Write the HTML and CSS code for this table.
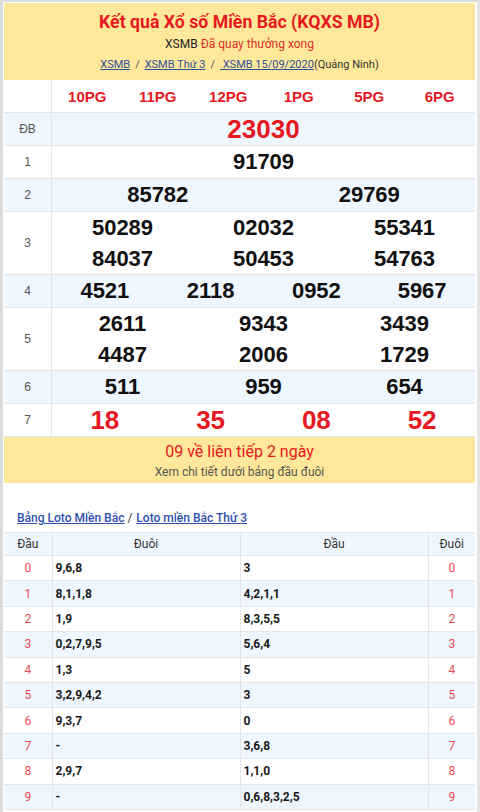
FILE: index.html
```html
<!DOCTYPE html>
<html lang="vi">
<head>
<meta charset="utf-8">
<title>KQXS MB</title>
<link rel="stylesheet" href="styles.css">
</head>
<body>
<div class="page">
  <div class="head">
    <h1 class="title">Kết quả Xổ số Miền Bắc (KQXS MB)</h1>
    <div class="sub">XSMB <span class="sub-red">Đã quay thưởng xong</span></div>
    <div class="crumbs"><a href="#">XSMB</a><span class="sep">/</span><a href="#">XSMB Thứ 3</a><span class="sep">/</span><a href="#">&nbsp;XSMB 15/09/2020</a>(Quảng Ninh)</div>
  </div>

  <div class="results">
    <div class="row">
      <div class="lab"></div>
      <div class="vals c6 codes"><span>10PG</span><span>11PG</span><span>12PG</span><span>1PG</span><span>5PG</span><span>6PG</span></div>
    </div>
    <div class="row alt">
      <div class="lab">ĐB</div>
      <div class="vals c1"><span class="db">23030</span></div>
    </div>
    <div class="row">
      <div class="lab">1</div>
      <div class="vals c1"><span>91709</span></div>
    </div>
    <div class="row alt">
      <div class="lab">2</div>
      <div class="vals c2"><span>85782</span><span>29769</span></div>
    </div>
    <div class="row dbl">
      <div class="lab">3</div>
      <div class="vals c3"><span>50289</span><span>02032</span><span>55341</span><span>84037</span><span>50453</span><span>54763</span></div>
    </div>
    <div class="row alt">
      <div class="lab">4</div>
      <div class="vals c4"><span>4521</span><span>2118</span><span>0952</span><span>5967</span></div>
    </div>
    <div class="row dbl">
      <div class="lab">5</div>
      <div class="vals c3"><span>2611</span><span>9343</span><span>3439</span><span>4487</span><span>2006</span><span>1729</span></div>
    </div>
    <div class="row alt">
      <div class="lab">6</div>
      <div class="vals c3"><span>511</span><span>959</span><span>654</span></div>
    </div>
    <div class="row">
      <div class="lab">7</div>
      <div class="vals c4 g7"><span>18</span><span>35</span><span>08</span><span>52</span></div>
    </div>
  </div>

  <div class="note">
    <div class="note-main">09 về liên tiếp 2 ngày</div>
    <div class="note-sub">Xem chi tiết dưới bảng đầu đuôi</div>
  </div>

  <div class="loto-links"><a href="#">Bảng Loto Miền Bắc</a><span class="lsep">/</span><a href="#">Loto miền Bắc Thứ 3</a></div>

  <table class="loto">
    <thead>
      <tr><th>Đầu</th><th>Đuôi</th><th>Đầu</th><th>Đuôi</th></tr>
    </thead>
    <tbody>
      <tr><td class="n">0</td><td class="v">9,6,8</td><td class="v">3</td><td class="n">0</td></tr>
      <tr><td class="n">1</td><td class="v">8,1,1,8</td><td class="v">4,2,1,1</td><td class="n">1</td></tr>
      <tr><td class="n">2</td><td class="v">1,9</td><td class="v">8,3,5,5</td><td class="n">2</td></tr>
      <tr><td class="n">3</td><td class="v">0,2,7,9,5</td><td class="v">5,6,4</td><td class="n">3</td></tr>
      <tr><td class="n">4</td><td class="v">1,3</td><td class="v">5</td><td class="n">4</td></tr>
      <tr><td class="n">5</td><td class="v">3,2,9,4,2</td><td class="v">3</td><td class="n">5</td></tr>
      <tr><td class="n">6</td><td class="v">9,3,7</td><td class="v">0</td><td class="n">6</td></tr>
      <tr><td class="n">7</td><td class="v">-</td><td class="v">3,6,8</td><td class="n">7</td></tr>
      <tr><td class="n">8</td><td class="v">2,9,7</td><td class="v">1,1,0</td><td class="n">8</td></tr>
      <tr><td class="n">9</td><td class="v">-</td><td class="v">0,6,8,3,2,5</td><td class="n">9</td></tr>
    </tbody>
  </table>
</div>
</body>
</html>
```

FILE: styles.css
```css
* { box-sizing: border-box; }
html, body { margin: 0; padding: 0; background: #fff; }
body { font-family: Roboto, "Liberation Sans", Arial, sans-serif; color: #222; }

.page {
  width: 480px;
  border-top: 2px solid #dcdcdc;
  border-left: 3px solid #dcdcdc;
  border-right: 3px solid #e4e4e4;
  padding: 1px 2px 0 1px;
  min-height: 812px;
}

.head {
  background: #ffe899;
  text-align: center;
  padding: 6px 0 7px;
}
.title {
  margin: 0;
  font-size: 17.7px;
  line-height: 26px;
  font-weight: 700;
  color: #e5191f;
}
.sub {
  font-size: 12px;
  line-height: 18px;
  color: #222;
}
.sub-red { color: #d9302b; }
.crumbs {
  margin-top: 3px;
  font-size: 11px;
  line-height: 17px;
  color: #333;
}
.crumbs a { color: #2f4f9f; text-decoration: underline; }
.sep { padding: 0 5px; color: #555; }

.row {
  display: flex;
  border-bottom: 1px solid #e2e6ea;
  background: #fff;
}
.row.alt { background: #eef6fe; }
.lab {
  width: 48px;
  flex: none;
  border-right: 1px solid #e2e6ea;
  display: flex;
  align-items: center;
  justify-content: center;
  font-family: "Liberation Sans", Arial, sans-serif;
  font-size: 12px;
  color: #555;
  background: #fff;
}
.row.alt .lab { background: #eef6fe; }
.vals {
  flex: 1;
  display: grid;
  grid-auto-rows: 32px;
  align-items: center;
  justify-items: center;
  font-family: "Liberation Sans", Arial, sans-serif;
  font-weight: 700;
  font-size: 22px;
  color: #111;
}
.row.dbl .vals { grid-auto-rows: 31px; }
.c1 { grid-template-columns: 1fr; }
.c2 { grid-template-columns: repeat(2, 1fr); }
.c3 { grid-template-columns: repeat(3, 1fr); }
.c4 { grid-template-columns: repeat(4, 1fr); }
.c6 { grid-template-columns: repeat(6, 1fr); }
.codes { font-size: 15px; color: #e5191f; }
.db { font-size: 26px; color: #e5191f; }
.g7 { font-size: 26px; color: #e5191f; }

.note {
  background: #ffe899;
  text-align: center;
  padding: 4px 0 2px;
}
.note-main {
  font-size: 16px;
  line-height: 22px;
  color: #e5191f;
}
.note-sub {
  font-size: 12px;
  line-height: 18px;
  color: #555;
}

.loto-links {
  margin: 26px 0 5px;
  padding-left: 13px;
  font-size: 12px;
  line-height: 18px;
  font-weight: 500;
}
.loto-links a { color: #2f4fb0; text-decoration: underline; }
.lsep { padding: 0 4px 0 3px; color: #333; font-weight: 400; }

.loto {
  width: 471px;
  border-collapse: collapse;
  table-layout: fixed;
  font-size: 12px;
}
.loto th, .loto td {
  border: 1px solid #e2e6ea;
  padding: 0 3px;
  height: 25.4px;
}
.loto tr > :first-child { border-left: 0; width: 48px; }
.loto tr > :last-child { border-right: 0; width: 47px; }
.loto th {
  height: 23px;
  font-weight: 400;
  color: #333;
  background: #eef6fe;
  text-align: center;
}
.loto tbody tr:nth-child(even) td { background: #eef6fe; }
.loto td.n { text-align: center; color: #ef4a52; }
.loto td.v { font-weight: 700; color: #1a1a1a; }
```
